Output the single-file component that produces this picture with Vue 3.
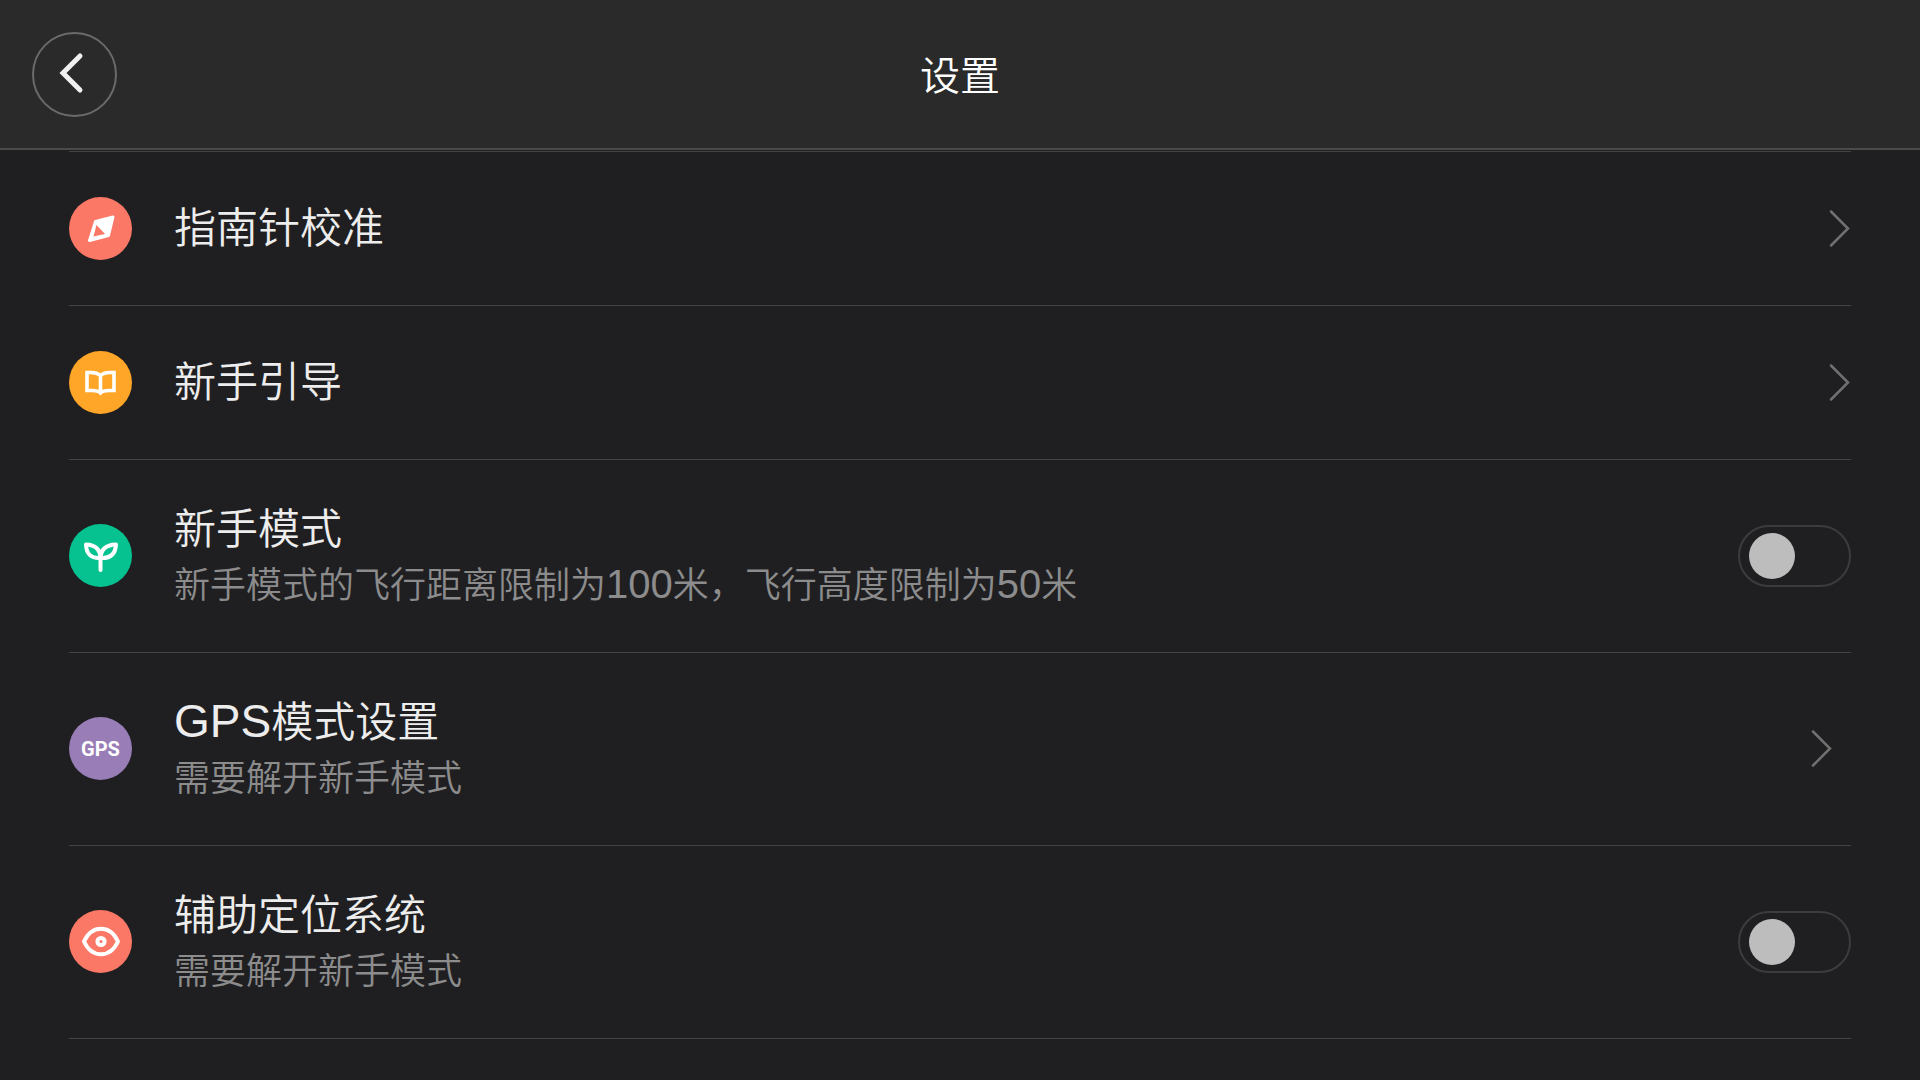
<template>
  <div class="page">
    <header class="header">
      <button type="button" class="back" aria-label="返回">
        <svg width="30" height="42" viewBox="0 0 30 42" fill="none">
          <path d="M24 4L7 21L24 38" stroke="#f0f0f0" stroke-width="5" stroke-linecap="round" />
        </svg>
      </button>
      <h1 class="title">设置</h1>
    </header>

    <main class="list">
      <component
        :is="item.type === 'switch' ? 'label' : 'button'"
        v-for="item in items"
        :key="item.id"
        :type="item.type === 'switch' ? null : 'button'"
        class="row"
        :class="{ tall: item.desc }"
      >
        <span class="icon" :class="item.id">
          <svg v-if="item.id === 'compass'" width="63" height="63" viewBox="0 0 63 63">
            <path
              d="M26.500 24.500L44 20L39.500 38.500L20.500 43.500Z"
              fill="#fff"
              stroke="#fff"
              stroke-width="3"
              stroke-linejoin="round"
            />
            <path d="M27.500 28L36 37L24.500 39.500Z" fill="#fb7766" />
          </svg>
          <svg
            v-else-if="item.id === 'guide'"
            width="63"
            height="63"
            viewBox="0 0 63 63"
            fill="none"
            stroke="#fff"
            stroke-width="3.6"
          >
            <path d="M31.500 24.500Q28 21.500 22 21.500H18V39.500H23Q29 39.500 31.500 42Q34 39.500 40 39.500H45V21.500H41Q35 21.500 31.500 24.500V41" />
          </svg>
          <svg
            v-else-if="item.id === 'novice'"
            width="63"
            height="63"
            viewBox="0 0 63 63"
            fill="none"
            stroke="#fff"
            stroke-width="4"
            stroke-linejoin="round"
            stroke-linecap="round"
          >
            <path d="M31.500 46V33" />
            <path d="M31.500 34Q32 21 47 20.500Q46 35 31.500 34Z" />
            <path d="M31.500 34Q31 21 17 20.500Q17.500 35 31.500 34Z" />
          </svg>
          <span v-else-if="item.id === 'gps'" class="gps-text">GPS</span>
          <svg v-else width="63" height="63" viewBox="0 0 63 63" fill="none" stroke="#fff">
            <path
              d="M15 31.500C23 14.500 41 14.500 49 31.500C41 48.500 23 48.500 15 31.500Z"
              stroke-width="4"
              stroke-linejoin="round"
            />
            <circle cx="32" cy="31.500" r="3.600" stroke-width="4" />
          </svg>
        </span>

        <span class="text">
          <span class="name">
            <span v-for="(part, i) in split(item.name)" :key="i" :class="{ latin: isLatin(part) }">{{ part }}</span>
          </span>
          <span v-if="item.desc" class="desc">
            <span v-for="(part, i) in split(item.desc)" :key="i" :class="{ latin: isLatin(part) }">{{ part }}</span>
          </span>
        </span>

        <input v-if="item.type === 'switch'" v-model="item.value" type="checkbox" role="switch" class="switch" />
        <svg
          v-else
          class="arrow"
          :class="{ inset: item.desc }"
          width="24"
          height="40"
          viewBox="0 0 24 40"
          fill="none"
        >
          <path d="M4 2.500L21 19.500L4 36.500" stroke="#707070" stroke-width="2.500" stroke-linecap="round" />
        </svg>
      </component>
    </main>
  </div>
</template>

<script setup>
import { ref } from 'vue'

const items = ref([
  { id: 'compass', type: 'link', name: '指南针校准' },
  { id: 'guide', type: 'link', name: '新手引导' },
  {
    id: 'novice',
    type: 'switch',
    name: '新手模式',
    desc: '新手模式的飞行距离限制为100米，飞行高度限制为50米',
    value: false
  },
  { id: 'gps', type: 'link', name: 'GPS模式设置', desc: '需要解开新手模式' },
  { id: 'vision', type: 'switch', name: '辅助定位系统', desc: '需要解开新手模式', value: false }
])

// latin letters and digits are set a bit larger than the Chinese text
const split = (text) => text.match(/[A-Za-z0-9]+|[^A-Za-z0-9]+/g)
const isLatin = (part) => /^[A-Za-z0-9]/.test(part)
</script>

<style>
body {
  background: #1f1f21;
}
</style>

<style scoped>
.page {
  min-height: 100vh;
  background: #1f1f21;
  color: #ededed;
  font-family: "Liberation Sans", "Noto Sans CJK SC", sans-serif;
  font-weight: 350;
}

.header {
  box-sizing: border-box;
  height: 150px;
  padding: 0 32px;
  display: grid;
  grid-template-columns: 85px 1fr 85px;
  align-items: center;
  background: #2a2a2a;
  border-bottom: 2px solid #4a4a4b;
}

.back {
  width: 85px;
  height: 85px;
  padding: 0 8px 2px 0;
  display: flex;
  align-items: center;
  justify-content: center;
  background: none;
  border: 2px solid #6a6a6a;
  border-radius: 50%;
  cursor: pointer;
}

.title {
  margin: 0;
  padding-top: 4px;
  font-size: 40px;
  line-height: 60px;
  font-weight: inherit;
  text-align: center;
  color: #fff;
}

.list {
  margin: 1px 69px 0;
  border-top: 1px solid #434345;
}

.row {
  box-sizing: border-box;
  width: 100%;
  min-height: 154px;
  padding: 0;
  display: flex;
  align-items: center;
  gap: 42px;
  background: none;
  border: 0;
  border-bottom: 1px solid #434345;
  color: inherit;
  font: inherit;
  text-align: left;
  cursor: pointer;
}

.row.tall {
  min-height: 193px;
  padding-bottom: 1px;
}

.icon {
  width: 63px;
  height: 63px;
  flex: none;
  display: flex;
  align-items: center;
  justify-content: center;
  border-radius: 50%;
}

.compass,
.vision {
  background: #fb7766;
}

.guide {
  background: #ffa527;
}

.novice {
  background: #06c290;
}

.gps {
  background: #987db6;
}

.gps-text {
  font-family: Roboto, sans-serif;
  font-size: 20px;
  line-height: 24px;
  font-weight: 700;
  color: #fff;
}

.text {
  flex: 1;
  display: flex;
  flex-direction: column;
}

.name {
  font-size: 42px;
  line-height: 60px;
}

.desc {
  font-size: 36px;
  line-height: 52px;
  color: #8c8c8d;
}

.latin {
  line-height: 1;
}

.name .latin {
  font-size: 46px;
}

.desc .latin {
  font-size: 40px;
}

.arrow {
  flex: none;
}

.arrow.inset {
  margin-right: 18px;
}

.switch {
  appearance: none;
  box-sizing: border-box;
  width: 113px;
  height: 62px;
  margin: 0;
  padding: 0 9px;
  flex: none;
  display: flex;
  align-items: center;
  border: 2px solid #3c3c3e;
  border-radius: 31px;
  cursor: pointer;
}

.switch::before {
  content: "";
  width: 46px;
  height: 46px;
  border-radius: 50%;
  background: #bdbdbd;
}

.switch:checked {
  justify-content: flex-end;
  background: #06c290;
}
</style>
